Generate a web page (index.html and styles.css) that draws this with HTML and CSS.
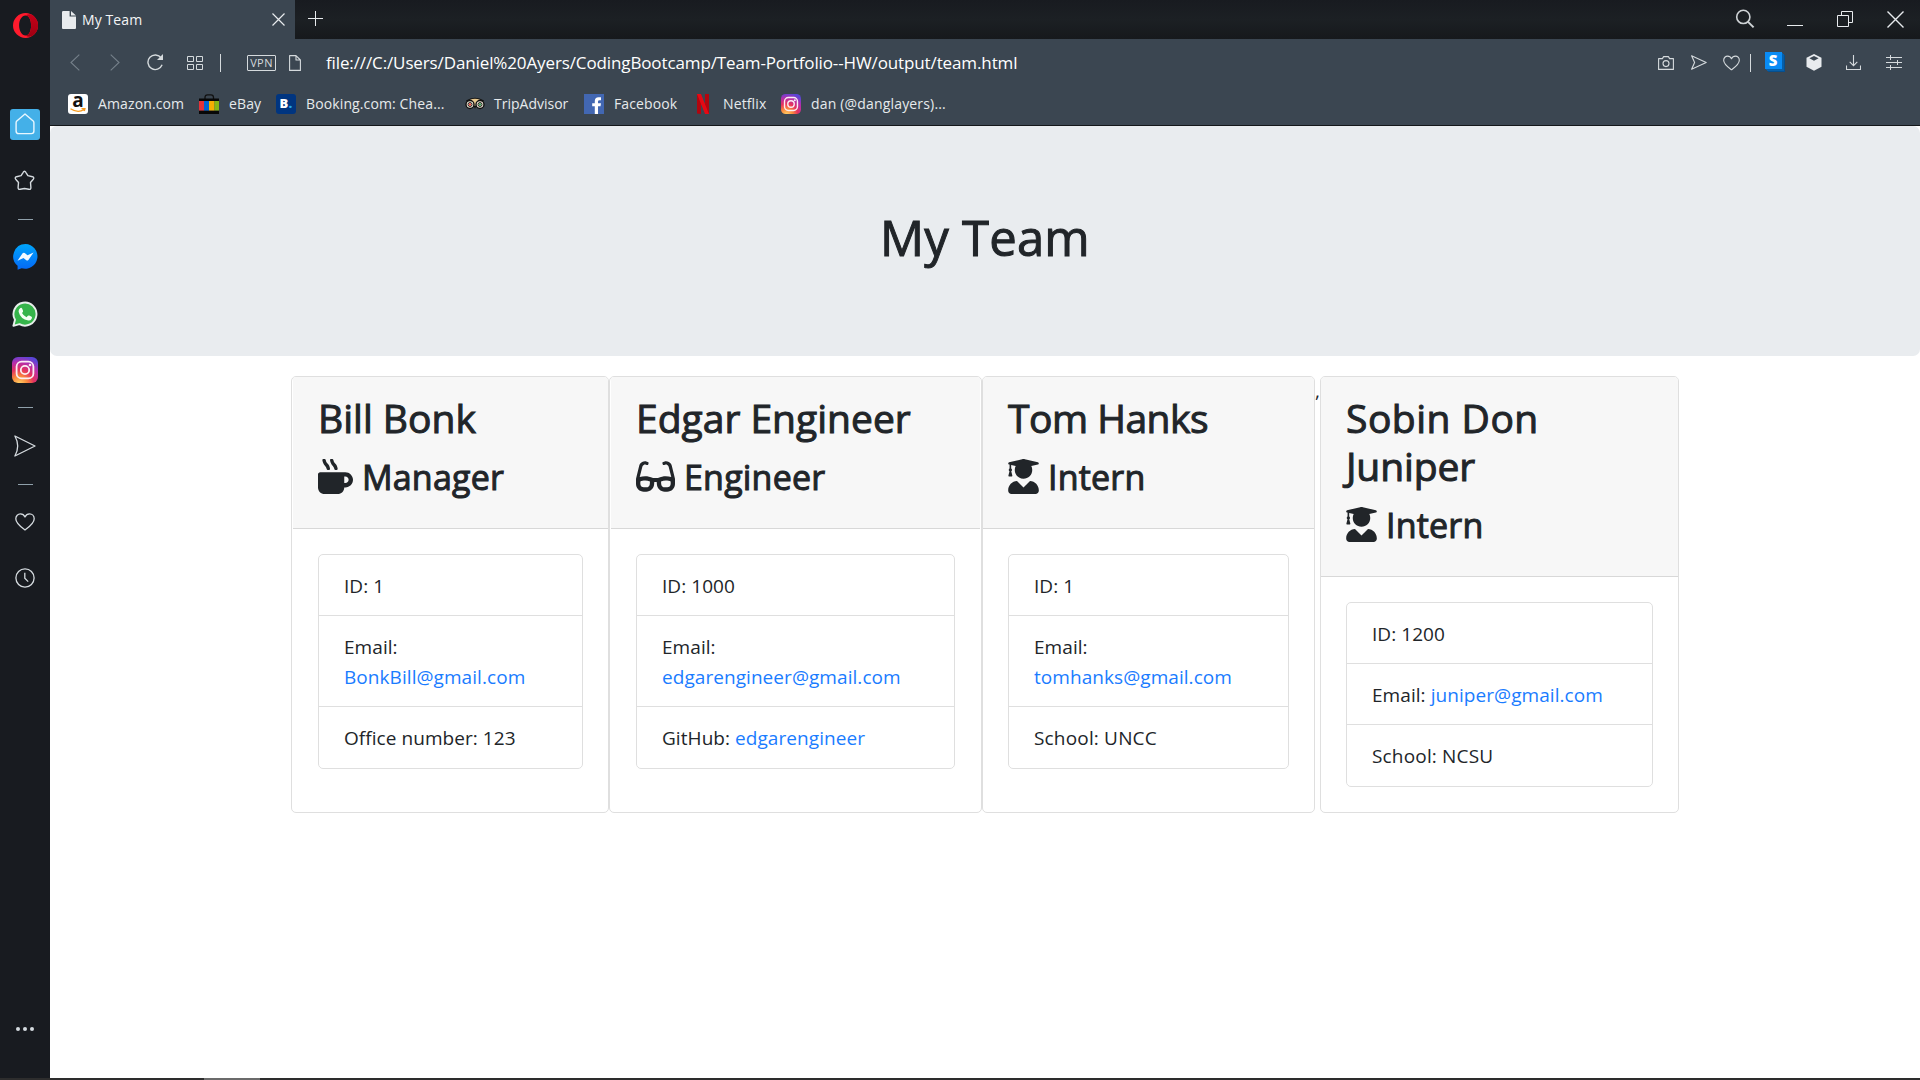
FILE: index.html
```html
<!DOCTYPE html>
<html lang="en">
<head>
<meta charset="utf-8">
<title>My Team</title>
<link rel="stylesheet" href="styles.css">
</head>
<body>
<svg class="defs" width="0" height="0">
  <defs>
    <radialGradient id="insta-fill" cx="0.28" cy="1.05" r="1.1">
      <stop offset="0" stop-color="#ffd76a"/><stop offset="0.28" stop-color="#fb8a3c"/><stop offset="0.52" stop-color="#e4325f"/><stop offset="0.78" stop-color="#b32fae"/><stop offset="1" stop-color="#5a45d6"/>
    </radialGradient>
    <linearGradient id="messenger-fill" x2="0" y2="1"><stop offset="0" stop-color="#00a5fb"/><stop offset="1" stop-color="#0468f6"/></linearGradient>
    <linearGradient id="opera-fill" x2="0" y2="1"><stop offset="0" stop-color="#c40018"/><stop offset="1" stop-color="#9e0012"/></linearGradient>
    <symbol id="instagram" viewBox="0 0 26 26">
      <rect width="26" height="26" rx="6" fill="url(#insta-fill)"/>
      <g fill="none" stroke="#fbeef3" stroke-width="1.8"><rect x="4.6" y="4.6" width="16.8" height="16.8" rx="5"/><circle cx="13" cy="13" r="4.2"/></g>
      <circle cx="18" cy="8" r="1.3" fill="#fbeef3"/>
    </symbol>
    <symbol id="send" viewBox="0 0 22 22"><path d="M.9 1 L21 11 L.9 21 Q6.5 11 .9 1Z" fill="none" stroke="currentColor" stroke-width="1.3" stroke-linejoin="round"/></symbol>
    <symbol id="heart" viewBox="0 0 20 18"><path d="M10 17 C7 14.8 .8 10.6 .8 5.8 C.8 2.8 3 .9 5.4 .9 C7.6 .9 9.2 2.2 10 4 C10.8 2.2 12.4 .9 14.6 .9 C17 .9 19.2 2.8 19.2 5.8 C19.2 10.6 13 14.8 10 17Z" fill="none" stroke="currentColor" stroke-width="1.3" stroke-linejoin="round"/></symbol>
    <symbol id="graduate" viewBox="0 0 448 512"><path fill="currentColor" d="M319.4 320.6L224 416l-95.4-95.4C57.1 323.7 0 382.2 0 454.4v9.6c0 26.5 21.5 48 48 48h352c26.5 0 48-21.5 48-48v-9.6c0-72.2-57.1-130.7-128.6-133.8zM13.6 79.8l6.4 1.5v58.4c-7 4.2-12 11.5-12 20.3 0 8.4 4.6 15.4 11.1 19.7L3.5 242c-1.7 6.9 2.1 14 7.6 14h41.8c5.5 0 9.3-7.1 7.6-14l-15.6-62.3C51.4 175.4 56 168.4 56 160c0-8.8-5-16.1-12-20.3V87.1l66 15.9c-8.6 17.2-14 36.4-14 57 0 70.7 57.3 128 128 128s128-57.3 128-128c0-20.6-5.3-39.8-14-57l96.3-23.2c18.2-4.4 18.2-27.1 0-31.5l-190.4-46c-13-3.1-26.7-3.1-39.7 0L13.6 48.2c-18.1 4.4-18.1 27.2 0 31.6z"/></symbol>
  </defs>
</svg>

<div class="window">
  <aside class="sidebar">
    <div class="slot slot-opera"><svg width="25" height="25" viewBox="0 0 25 25"><path fill="#ff1b2d" fill-rule="evenodd" d="M12.5 0a12.5 12.5 0 1 0 0 25a12.5 12.5 0 1 0 0-25Zm0 2.6c3.6 0 5.6 4.4 5.6 9.9s-2 9.9-5.6 9.9s-6.4-4.4-6.4-9.9s2.8-9.9 6.4-9.9Z"/><path fill="url(#opera-fill)" d="M12.5 2.6C15 .9 18 .9 20.6 2.9A12.5 12.5 0 0 1 20.6 22.1C18 24.1 15 24.1 12.5 22.4C16.1 22.4 18.1 18 18.1 12.5S16.1 2.6 12.5 2.6Z"/></svg></div>
    <div class="slot slot-home"><span class="home"><svg width="20" height="22" viewBox="0 0 20 22"><path d="M10 1 L18.2 8 Q18.9 8.7 18.9 9.7 V18 Q18.9 20.6 16.3 20.6 H3.7 Q1.1 20.6 1.1 18 V9.7 Q1.1 8.7 1.8 8Z" fill="none" stroke="#e9f7ff" stroke-width="1.4" stroke-linejoin="round"/></svg></span></div>
    <div class="slot slot-star"><svg width="21" height="21" viewBox="0 0 21 21"><path d="M10.5 1.200 Q11.300 1.200 11.800 2.300 L13.900 5.600 L18.400 6.700 Q20.600 7.400 19.300 9.200 L16.500 12.500 L16.900 17.500 Q16.900 19.900 14.700 19.300 L10.500 18.500 L6.300 19.300 Q4.100 19.900 4.100 17.500 L4.500 12.500 L1.700 9.200 Q.4 7.400 2.600 6.700 L7.100 5.600 L9.200 2.300 Q9.700 1.200 10.500 1.200Z" fill="none" stroke="currentColor" stroke-width="1.4" stroke-linejoin="round"/></svg></div>
    <div class="slot slot-dash"><i class="dash"></i></div>
    <div class="slot slot-messenger"><svg width="25" height="26" viewBox="0 0 25 26"><path fill="url(#messenger-fill)" d="M12.5 0A12.4 12.4 0 1 1 8.6 24.3L4.6 25.8V21.8A12.4 12.4 0 0 1 12.5 0Z"/><path fill="#f4faff" d="M4.500 16.800 L9.600 9.200 Q10.600 8.200 11.700 9 L14.500 11.300 L20.600 8.400 L15.400 16 Q14.400 17 13.300 16.200 L10.500 14Z"/></svg></div>
    <div class="slot slot-whatsapp"><svg width="26" height="26" viewBox="0 0 26 26"><path d="M1.400 24.800 L3 18.800 A11.500 11.500 0 1 1 7.500 23.200Z" fill="#35b44a" stroke="#e8eeeb" stroke-width="1.9" stroke-linejoin="round"/><path d="M8.100 7.200 Q9.400 6 10.100 7.600 L11.100 10 Q11.300 10.800 10 12.100 Q11.500 15 14.500 16.200 L15.900 14.700 Q16.500 14.200 17.300 14.600 L19.600 15.800 Q20.300 16.200 19.800 17.400 Q18.700 19.700 16.300 19.600 Q8.500 18.300 6.600 10.800 Q6.400 8.600 8.100 7.200Z" fill="#f4fff4"/></svg></div>
    <div class="slot slot-instagram"><svg width="26" height="26"><use href="#instagram"/></svg></div>
    <div class="slot slot-dash-2"><i class="dash"></i></div>
    <div class="slot slot-send"><svg width="22" height="22"><use href="#send"/></svg></div>
    <div class="slot slot-dash-3"><i class="dash"></i></div>
    <div class="slot slot-heart"><svg width="20" height="18"><use href="#heart"/></svg></div>
    <div class="slot slot-clock"><svg width="20" height="20" viewBox="0 0 20 20"><g fill="none" stroke="currentColor" stroke-width="1.3"><circle cx="10" cy="10" r="9.1"/><path d="M9.800 4.800V10.300L13.200 13.600"/></g></svg></div>
    <div class="slot slot-more"><svg width="18" height="4" viewBox="0 0 18 4"><g fill="currentColor"><circle cx="2" cy="2" r="2"/><circle cx="9" cy="2" r="2"/><circle cx="16" cy="2" r="2"/></g></svg></div>
  </aside>

  <div class="main">
    <header class="titlebar">
      <div class="tab">
        <svg width="14" height="18" viewBox="0 0 14 18"><path fill="#e8ebee" d="M1.200 0H7.600V5.600H14V17Q14 18 13 18H1Q0 18 0 17V1.200Q0 0 1.200 0ZM9 0L14 4.600H9Z"/></svg>
        <span class="tab-title">My Team</span>
        <svg class="tab-close" width="13" height="13" viewBox="0 0 13 13"><path d="M.5 .5L12.500 12.500M12.500 .5L.5 12.500" stroke="#e8ebee" stroke-width="1.2"/></svg>
      </div>
      <svg class="new-tab" width="15" height="15" viewBox="0 0 15 15"><path d="M7.500 0V15M0 7.500H15" stroke="#e8ebee"/></svg>
      <div class="window-controls">
        <svg width="20" height="20" viewBox="0 0 20 20"><g fill="none" stroke="#cfd3d6" stroke-width="1.6"><circle cx="8.300" cy="7.900" r="6.600"/><path d="M12.800 12.600L18.600 18.400" stroke-width="2"/></g></svg>
        <svg width="16" height="16" viewBox="0 0 16 16"><path d="M0 14.500H16" stroke="#e8ebee"/></svg>
        <svg width="16" height="16" viewBox="0 0 16 16"><path d="M.5 4.500H11.500V15.500H.5ZM4.500 4.500V.5H15.500V11.500H11.500" fill="none" stroke="#e8ebee"/></svg>
        <svg width="17" height="17" viewBox="0 0 17 17"><path d="M.5 .5L16.500 16.500M16.500 .5L.5 16.500" stroke="#e8ebee" stroke-width="1.4"/></svg>
      </div>
    </header>

    <div class="toolbar">
      <div class="nav">
        <svg class="dim" width="10" height="17" viewBox="0 0 10 17"><path d="M9.300 .7L1 8.500L9.300 16.300" fill="none" stroke="currentColor" stroke-width="1.1"/></svg>
        <svg class="dim" width="10" height="17" viewBox="0 0 10 17"><path d="M.7 .7L9 8.500L.7 16.300" fill="none" stroke="currentColor" stroke-width="1.1"/></svg>
        <svg width="17" height="17" viewBox="0 0 17 17"><path d="M15.100 10.800A7.300 7.300 0 1 1 14.200 4" fill="none" stroke="currentColor" stroke-width="1.4"/><path d="M16 0V6H10Z" fill="currentColor"/></svg>
        <svg width="16" height="14" viewBox="0 0 16 14"><path d="M.5 .5H6.500V5.500H.5ZM9.500 .5H15.500V5.500H9.500ZM.5 8.500H6.500V13.500H.5ZM9.500 8.500H15.500V13.500H9.500Z" fill="none" stroke="currentColor"/></svg>
        <i class="bar"></i>
        <span class="vpn">VPN</span>
        <svg width="12" height="16" viewBox="0 0 12 16"><path d="M.6 .6H7L11.400 5V15.400H.6ZM7 .6V5H11.400" fill="none" stroke="currentColor" stroke-width="1.1" stroke-linejoin="round"/></svg>
      </div>
      <span class="url">file:///C:/Users/Daniel%20Ayers/CodingBootcamp/Team-Portfolio--HW/output/team.html</span>
      <div class="tools">
        <svg width="16" height="14" viewBox="0 0 16 14"><g fill="none" stroke="currentColor" stroke-width="1.1"><path d="M.6 2.600H4.400L5.600 .6H10.400L11.600 2.600H15.400V13.400H.6Z" stroke-linejoin="round"/><circle cx="8" cy="7.600" r="3"/></g></svg>
        <svg width="16" height="15" viewBox="0 0 16 15"><path d="M.6 .7L15.200 7.500L.6 14.300L3.600 7.500Z" fill="none" stroke="currentColor" stroke-width="1.1" stroke-linejoin="round"/></svg>
        <svg width="17" height="16"><use href="#heart"/></svg>
        <i class="bar"></i>
        <span class="skype">S</span>
        <svg width="16" height="17" viewBox="0 0 16 17"><path fill="#e8ebee" fill-rule="evenodd" d="M8 0L15.500 3.700V12.700L8 16.800L.5 12.700V3.700ZM8 2L3.400 4.300L8 6.700L12.600 4.300Z"/></svg>
        <svg width="15" height="15" viewBox="0 0 15 15"><path d="M7.500 0V10.400M3.700 6.800L7.500 10.600L11.300 6.800M.5 10.500V14.500H14.500V10.500" fill="none" stroke="currentColor" stroke-width="1.1"/></svg>
        <svg width="16" height="15" viewBox="0 0 16 15"><path d="M0 2.500H16M0 7.500H16M0 12.500H16M4.500 0V5M11.500 5V10M4.500 10V15" fill="none" stroke="currentColor"/></svg>
      </div>
    </div>

    <nav class="bookmarks">
      <div class="bookmark bm-amazon"><span class="amazon">a<svg width="16" height="5" viewBox="0 0 16 5"><path d="M.5 .8Q8 5.600 14 1.500M11.500 .6L15 .4L14.300 3" fill="none" stroke="#f79b1e" stroke-width="1.3"/></svg></span>Amazon.com</div>
      <div class="bookmark bm-ebay"><svg width="20" height="20" viewBox="0 0 20 20"><path d="M6 6V3.500Q6 .8 8.500 .8H12Q14.500 .8 14.500 3.500V6" fill="none" stroke="#111" stroke-width="1.3"/><path fill="#080808" d="M0 4.500H20V7H0ZM0 16.500H20V20H0Z"/><path fill="#e53238" d="M0 7H5V16.500H0Z"/><path fill="#0064d2" d="M5 7H10V16.500H5Z"/><path fill="#f5af02" d="M10 7H15.500V16.500H10Z"/><path fill="#86b817" d="M15.500 7H20V16.500H15.500Z"/></svg>eBay</div>
      <div class="bookmark bm-booking"><span class="booking">B<b>.</b></span>Booking.com: Chea...</div>
      <div class="bookmark bm-trip"><svg width="20" height="20" viewBox="0 0 20 20"><path d="M1 6.500Q10 1 19 6.500L17.500 9H2.500Z" fill="#111"/><path d="M4.500 6Q10 3.500 15.500 6L10 12Z" fill="#e8c98f"/><g fill="#f2ead8" stroke="#111" stroke-width="1.4"><circle cx="5" cy="10.500" r="4"/><circle cx="15" cy="10.500" r="4"/></g><g fill="none" stroke="#111" stroke-width=".9"><circle cx="5" cy="10.500" r="2"/><circle cx="15" cy="10.500" r="2"/></g><circle cx="5" cy="10.500" r="1.200" fill="#e0453c"/><circle cx="15" cy="10.500" r="1.200" fill="#3d9b55"/><path d="M8.800 12H11.200L10 15Z" fill="#111"/></svg>TripAdvisor</div>
      <div class="bookmark bm-facebook"><svg width="20" height="20" viewBox="0 0 20 20"><path fill="#4267b2" d="M0 0H20V20H0Z"/><path fill="#fff" d="M10.800 20V12.300H8.200V9.200H10.800V7Q10.800 3.200 14.600 3.200H17V6.200H15.500Q14 6.200 14 7.600V9.200H17L16.500 12.300H14V20Z"/></svg>Facebook</div>
      <div class="bookmark bm-netflix"><svg width="20" height="20" viewBox="0 0 20 20"><path fill="#b1060f" d="M4 0H8V20L4 19.600ZM12 0H16V19.600L12 20Z"/><path fill="#e50914" d="M4 0H8L16 20H12Z"/></svg>Netflix</div>
      <div class="bookmark bm-dan"><svg width="20" height="20"><use href="#instagram"/></svg>dan (@danglayers)...</div>
    </nav>

    <main class="page">
      <section class="jumbotron"><h1>My Team</h1></section>
      <section class="team">
        <article class="card card-bill">
          <div class="card-header">
            <h2>Bill Bonk</h2>
            <h3><svg width="35" height="35" viewBox="0 0 512 512"><path fill="currentColor" d="M127.100 146.500c1.300 7.700 8 13.500 16 13.500h16.500c9.800 0 17.600-8.500 16.300-18-3.800-28.200-16.400-54.200-36.600-74.700-14.400-14.700-23.600-33.300-26.400-53.500C111.800 5.900 105 0 96.800 0H80.400C70.600 0 63 8.500 64.100 18c3.900 31.900 18 61.300 40.600 84.400 12 12.200 19.700 27.500 22.400 44.100zm112 0c1.300 7.700 8 13.500 16 13.500h16.500c9.800 0 17.600-8.500 16.300-18-3.800-28.200-16.400-54.200-36.600-74.700-14.400-14.700-23.600-33.300-26.400-53.500C223.800 5.900 217 0 208.800 0h-16.400c-9.800 0-17.500 8.500-16.300 18 3.900 31.900 18 61.300 40.600 84.400 12 12.200 19.700 27.500 22.400 44.100zM400 192H32c-17.700 0-32 14.300-32 32v192c0 53 43 96 96 96h192c53 0 96-43 96-96h16c61.800 0 112-50.200 112-112s-50.200-112-112-112zm0 160h-16v-96h16c26.500 0 48 21.500 48 48s-21.500 48-48 48z"/></svg><span>Manager</span></h3>
          </div>
          <ul class="list">
            <li>ID: 1</li>
            <li>Email:<br><a>BonkBill@gmail.com</a></li>
            <li>Office number: 123</li>
          </ul>
        </article>
        <article class="card card-edgar">
          <div class="card-header">
            <h2>Edgar Engineer</h2>
            <h3><svg width="39" height="35" viewBox="0 0 576 512"><path fill="currentColor" d="M574.100 280.370L528.750 98.660c-5.910-23.700-21.590-44.050-43-55.810-21.440-11.730-46.970-14.110-70.190-6.330l-15.250 5.080c-8.390 2.790-12.920 11.860-10.120 20.240l5.060 15.180c2.790 8.380 11.850 12.910 20.230 10.120l13.180-4.390c10.870-3.620 23-3.570 33.160 1.730 10.290 5.370 17.570 14.560 20.370 25.820l38.460 153.820c-22.190-6.810-49.790-12.460-81.200-12.460-34.770 0-73.980 7.020-114.850 26.740h-73.180c-40.870-19.740-80.080-26.750-114.860-26.750-31.420 0-59.020 5.650-81.210 12.460l38.460-153.830c2.790-11.250 10.090-20.450 20.380-25.810 10.160-5.300 22.280-5.350 33.150-1.730l13.170 4.390c8.380 2.790 17.440-1.740 20.230-10.120l5.060-15.180c2.800-8.380-1.730-17.450-10.120-20.240l-15.250-5.080c-23.220-7.780-48.750-5.410-70.190 6.330-21.410 11.770-37.090 32.110-43 55.800L1.900 280.370A64.218 64.218 0 0 0 0 295.860v70.250C0 429.010 51.580 480 115.200 480h37.120c60.280 0 110.370-45.940 114.880-105.370l2.930-38.630h35.750l2.930 38.630C313.310 434.060 363.400 480 423.680 480h37.120c63.620 0 115.200-50.990 115.200-113.880v-70.250c0-5.230-.64-10.430-1.900-15.500zm-370.720 89.420c-1.970 25.910-24.400 46.210-51.060 46.210H115.200C86.970 416 64 393.620 64 366.110v-37.540c18.120-6.490 43.420-12.920 72.580-12.920 23.860 0 47.260 4.330 69.930 12.920l-3.130 41.220zM512 366.120c0 27.510-22.970 49.880-51.200 49.880h-37.120c-26.670 0-49.100-20.300-51.060-46.210l-3.130-41.220c22.670-8.590 46.080-12.920 69.950-12.920 29.120 0 54.430 6.440 72.550 12.930v37.540z"/></svg><span>Engineer</span></h3>
          </div>
          <ul class="list">
            <li>ID: 1000</li>
            <li>Email:<br><a>edgarengineer@gmail.com</a></li>
            <li>GitHub: <a>edgarengineer</a></li>
          </ul>
        </article>
        <article class="card card-tom">
          <div class="card-header">
            <h2>Tom Hanks</h2>
            <h3><svg width="31" height="35"><use href="#graduate"/></svg><span>Intern</span></h3>
          </div>
          <ul class="list">
            <li>ID: 1</li>
            <li>Email:<br><a>tomhanks@gmail.com</a></li>
            <li><span class="school">School: UNCC</span></li>
          </ul>
        </article>
        <span class="comma">,</span>
        <article class="card card-sobin">
          <div class="card-header">
            <h2>Sobin Don<br><span class="surname">Juniper</span></h2>
            <h3><svg width="31" height="35"><use href="#graduate"/></svg><span>Intern</span></h3>
          </div>
          <ul class="list">
            <li>ID: 1200</li>
            <li>Email: <a>juniper@gmail.com</a></li>
            <li><span class="school">School: NCSU</span></li>
          </ul>
        </article>
      </section>
    </main>
  </div>
  <div class="taskbar"><i></i></div>
</div>
</body>
</html>
```
FILE: styles.css
```css
* { box-sizing: border-box; }

body {
  margin: 0;
  font-family: "Open Sans", "Noto Sans", sans-serif;
  color: #212529;
  background: #fff;
  overflow: hidden;
}

svg { display: block; flex: none; }
.defs { position: absolute; }

.window {
  display: grid;
  grid-template: 1078px 2px / 50px 1870px;
  width: 1920px;
  height: 1080px;
}

/* Sidebar */
.sidebar {
  display: flex;
  flex-direction: column;
  background: #181b20;
  color: #d5dbdf;
}
.slot { display: flex; flex: none; align-items: center; justify-content: center; width: 49px; }
.slot-opera { height: 51px; width: 51px; margin-bottom: 43px; }
.slot-home { height: 60px; width: 50px; }
.slot-star { height: 52px; margin-bottom: 1px; }
.slot-dash { height: 25px; width: 51px; }
.slot-messenger { height: 50px; width: 50px; }
.slot-whatsapp { height: 64px; width: 50px; }
.slot-instagram { height: 48px; width: 50px; }
.slot-dash-2 { height: 27px; width: 51px; }
.slot-send { height: 49px; width: 50px; margin-bottom: 2px; }
.slot-dash-3 { height: 25px; width: 51px; }
.slot-heart { height: 49px; }
.slot-clock { height: 64px; }
.slot-more { height: 20px; width: 50px; margin-top: auto; margin-bottom: 39px; }
.home {
  display: flex;
  align-items: center;
  justify-content: center;
  width: 30px;
  height: 31px;
  border-radius: 3px;
  background: #44b0e8;
}
.dash { width: 15px; height: 1px; background: #8fa0aa; }

/* Tab strip */
.main { display: grid; grid-template-rows: 39px 47px 40px 952px; }
.titlebar {
  display: flex;
  align-items: center;
  background: linear-gradient(#181b20, #1c2024 50%, #16191c);
}
.tab {
  display: flex;
  align-items: center;
  width: 245px;
  height: 39px;
  padding: 0 10px 0 12px;
  background: #3b4651;
  color: #f3f5f6;
  font-size: 14px;
}
.tab-title { margin-left: 6px; letter-spacing: 0.1px; }
.tab-close { margin-left: auto; }
.new-tab { margin-left: 13px; margin-bottom: 2px; }
.window-controls {
  display: grid;
  grid-template-columns: repeat(4, 50px);
  place-items: center;
  height: 39px;
  margin-left: auto;
}
.window-controls svg { margin-bottom: 1px; }

/* Address bar */
.toolbar {
  display: flex;
  align-items: center;
  background: #3b4651;
  color: #d5dadd;
}
.nav {
  display: grid;
  grid-template-columns: 40px 40px 40px 40px 11px 14px 43px 24px;
  place-items: center;
  padding-left: 5px;
}
.nav .vpn { grid-column: 7; }
.dim { color: #75808a; }
.bar { width: 1px; height: 18px; background: #d5dadd; }
.vpn {
  width: 29px;
  height: 16px;
  border: 1px solid #d5dadd;
  border-radius: 1px;
  font-size: 11px;
  line-height: 14px;
  text-align: center;
  letter-spacing: 0.4px;
}
.url { margin-left: 19px; font-size: 17px; letter-spacing: -0.12px; color: #fff; }
.tools {
  display: grid;
  grid-template-columns: 32px 33px 32px 7px 42px 36px 42px 40px;
  place-items: center;
  margin-left: auto;
  padding-right: 6px;
}
.skype {
  width: 17px;
  height: 17px;
  margin: 0 4px 4px 0;
  background: #0a8cf5;
  box-shadow: 1px 1px #075fa8, 2px 2px #075fa8, 3px 3px #064f8e;
  color: #fff;
  font-size: 15px;
  font-weight: 900;
  line-height: 17px;
  text-align: center;
}

/* Bookmarks */
.bookmarks {
  display: flex;
  align-items: center;
  padding: 0 0 5px 18px;
  border-bottom: 1px solid #14171a;
  background: #3b4651;
  color: #e6eaec;
  font-size: 14px;
  letter-spacing: 0.12px;
  white-space: nowrap;
}
.bookmark { display: flex; align-items: center; gap: 10px; }
.bookmark > :first-child { margin-top: 2px; }
.bm-amazon { width: 131px; }
.bm-ebay { width: 77px; }
.bm-booking { width: 189px; }
.bm-trip { width: 119px; gap: 9px; letter-spacing: 0; }
.bm-facebook { width: 109px; }
.bm-netflix { width: 88px; }
.bm-dan { letter-spacing: 0.17px; }
.amazon {
  width: 20px;
  height: 20px;
  border-radius: 3px;
  background: #fff;
  color: #111;
  font-size: 19px;
  font-weight: 700;
  line-height: 13px;
  text-align: center;
}
.amazon svg { margin: 1px 0 0 2px; }
.booking {
  width: 20px;
  height: 20px;
  border-radius: 3px;
  background: #003580;
  color: #fff;
  font-size: 13px;
  font-weight: 800;
  line-height: 19px;
  text-align: center;
}
.booking b { color: #25a8e8; }

/* Page */
.page { background: #fff; }
.jumbotron {
  height: 230px;
  padding-top: 81px;
  border-radius: 7px;
  background: #e9ecef;
  text-align: center;
}
h1, h2, h3 { margin: 0; font-weight: 400; -webkit-text-stroke: 1px currentColor; }
h3 svg { -webkit-text-stroke: 0; }
h1 { font-size: 49px; line-height: 60px; letter-spacing: 0.2px; }

.team {
  display: flex;
  align-items: stretch;
  width: 1388px;
  height: 437px;
  margin: 20px 0 0 241px;
}
.card {
  border: 1px solid #dfdfdf;
  border-radius: 5px;
  background: #fff;
  overflow: hidden;
}
.card-bill { width: 318px; padding-left: 1px; }
.card-edgar { width: 373px; padding: 0 1px; }
.card-tom { width: 333px; }
.card-sobin { width: 359px; }
.card-header {
  padding: 17px 25px 14px;
  border-bottom: 1px solid #d8d8d8;
  background: #f7f7f7;
}
h2 { font-size: 39px; line-height: 48px; white-space: nowrap; }
h3 {
  display: flex;
  align-items: center;
  gap: 9px;
  height: 72px;
  padding-bottom: 3px;
  font-size: 34px;
  line-height: 42px;
  letter-spacing: 0.2px;
}
h3 span { margin-top: 1px; }
.card-tom h2 { letter-spacing: -0.5px; }
.card-sobin h2 { letter-spacing: 0.5px; }
.card-sobin .surname { letter-spacing: -0.1px; }
.list {
  margin: 25px;
  padding: 0;
  border: 1px solid #dfdfdf;
  border-radius: 5px;
  list-style: none;
  font-size: 19px;
  line-height: 30px;
  letter-spacing: 0.06px;
}
.list li { padding: 16px 25px 14px; }
.list li + li { border-top: 1px solid #dfdfdf; }
.list li:last-child { padding-bottom: 15px; }
.list a { color: #1a7cff; }
.school { letter-spacing: 0.17px; }
.comma { width: 5px; font-size: 19px; line-height: 30px; }

/* Taskbar edge */
.taskbar { grid-column: 1 / 3; background: #2d2d2d; }
.taskbar i { display: block; width: 56px; height: 2px; margin-left: 204px; background: #6b6b6b; }
```
